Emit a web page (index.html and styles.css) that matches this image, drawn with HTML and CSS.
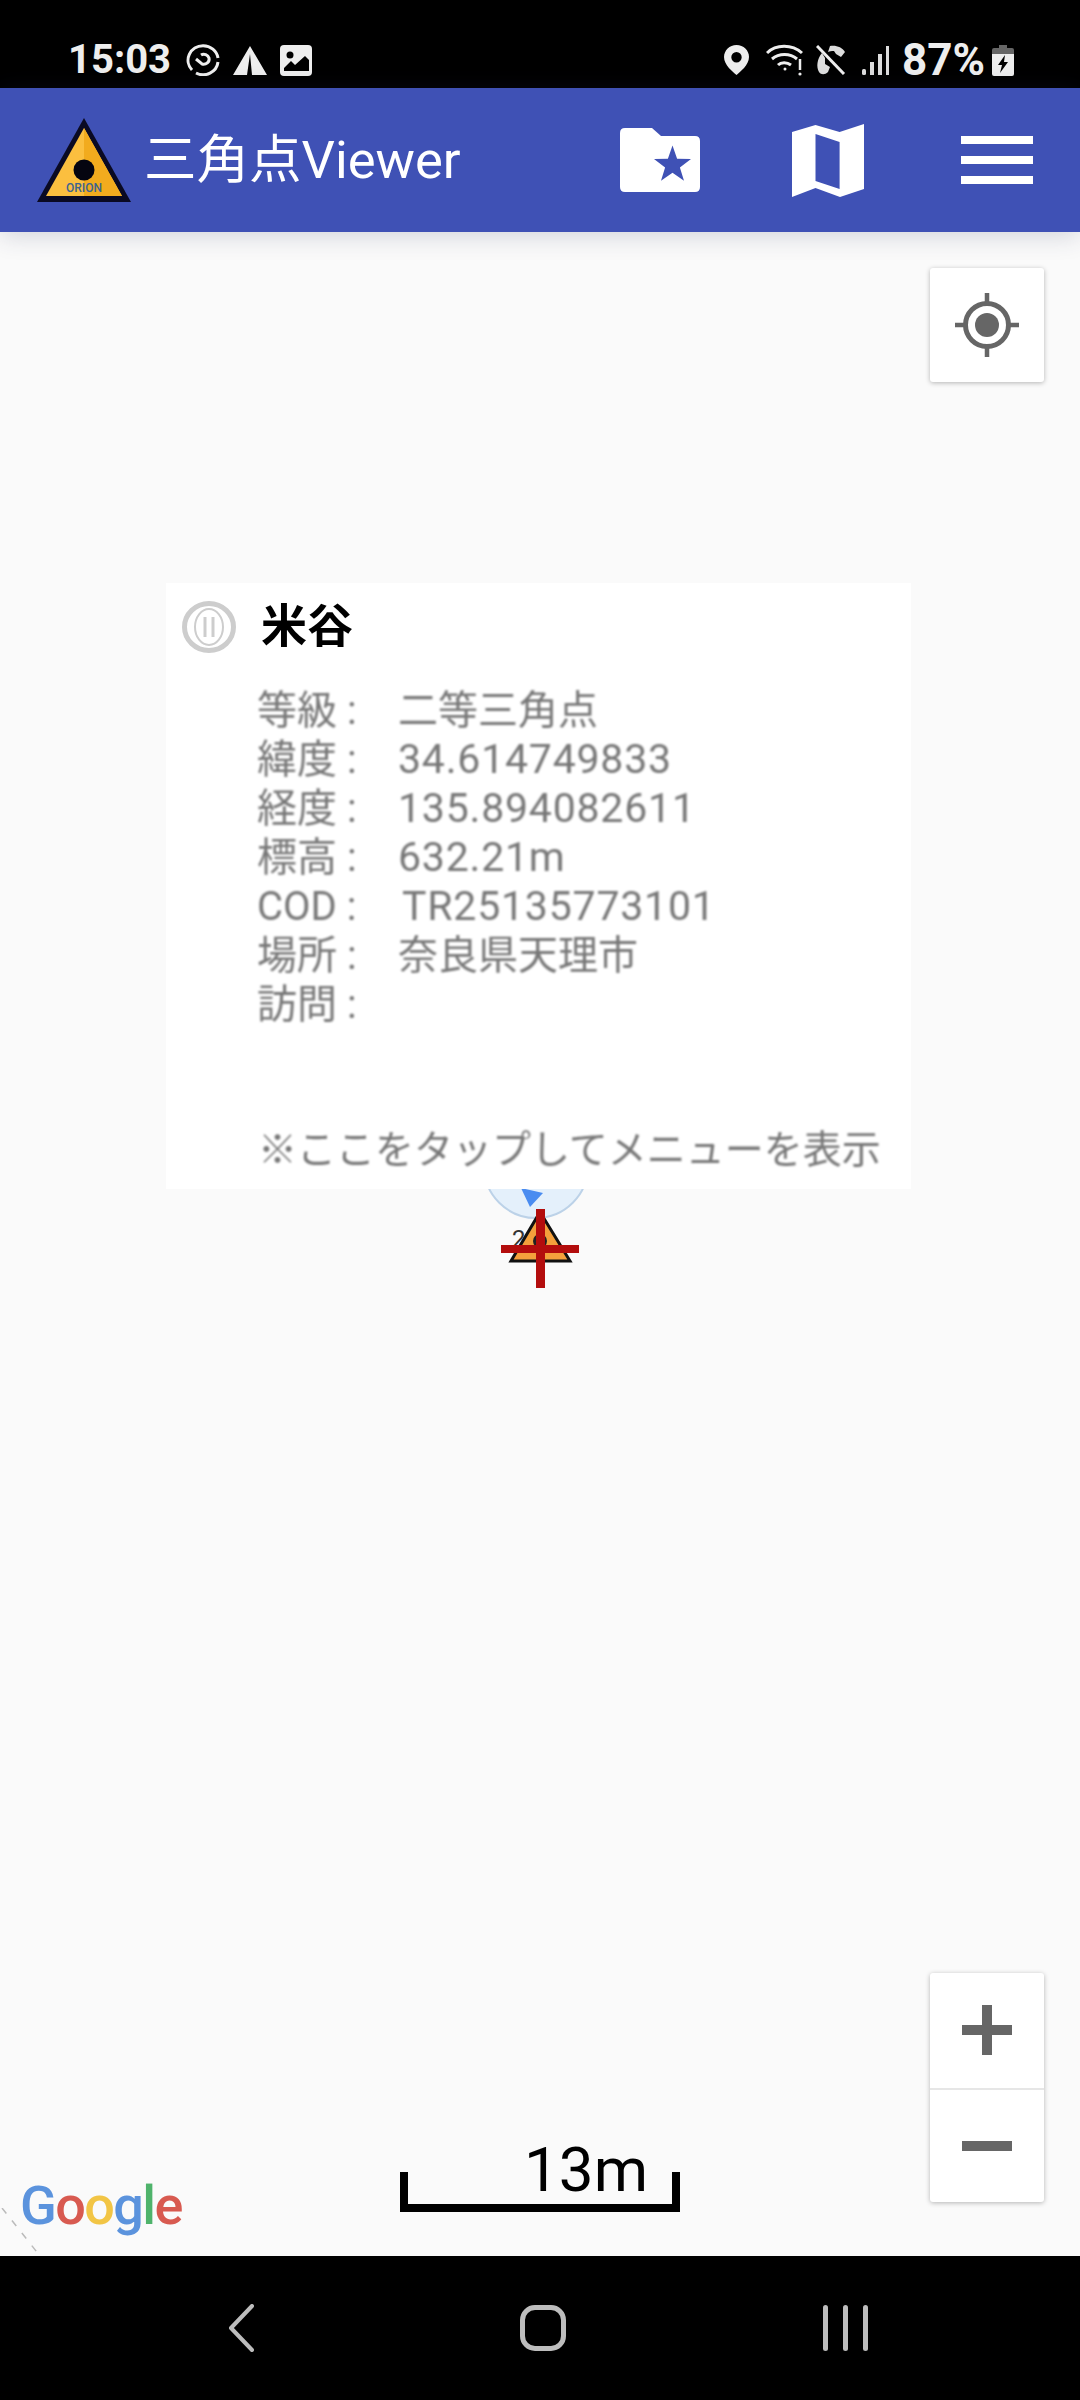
FILE: index.html
```html
<!DOCTYPE html>
<html lang="ja">
<head>
    <meta charset="UTF-8">
    <meta name="viewport" content="width=device-width, initial-scale=1.0">
    <title>三角点Viewer</title>
    <link rel="stylesheet" href="styles.css">
</head>
<body>
    <div id="app">
        <!-- status bar -->
        <div class="status-bar">
            <span class="status-time">15:03</span>
            <svg class="st-swirl" width="34" height="32" viewBox="0 0 34 32" fill="none" stroke="#eee" stroke-width="3">
                <path d="M6 26A15 14.500 0 0 1 17 1.700A15 14.500 0 0 1 32 14"/>
                <path d="M32 18A15 14.500 0 0 1 10 29"/>
                <path d="M10 15l6 5c4 1 8-2 7-6c-1-3-5-5-8-3"/>
            </svg>
            <svg class="st-tri" width="34" height="29" viewBox="0 0 34 29">
                <path d="M17 0L34 29H19L17 8L14 29H0Z" fill="#eee"/>
            </svg>
            <svg class="st-image" width="32" height="31" viewBox="0 0 32 31">
                <rect width="32" height="31" rx="4" fill="#eee"/>
                <circle cx="10" cy="10" r="3.500" fill="#000"/>
                <path d="M4 26V23L11 16L15 20L25 11L29 15V26Z" fill="#000"/>
            </svg>
            <svg class="st-pin" width="25" height="30" viewBox="0 0 25 30">
                <path fill-rule="evenodd" d="M12.500 0C5.500 0 0 5.500 0 12C0 20 9 27 12.500 30C16 27 25 20 25 12C25 5.500 19.500 0 12.500 0ZM12.500 7A5.200 5.200 0 1 1 12.500 17.400A5.200 5.200 0 1 1 12.500 7Z" fill="#eee"/>
            </svg>
            <svg class="st-wifi" width="38" height="32" viewBox="0 0 38 32" fill="none" stroke="#eee" stroke-width="3">
                <path d="M1 9C10 0 26 0 36 9"/>
                <path d="M6 15C13 9 24 9 31 15"/>
                <path d="M12 21C15 18 21 18 25 21"/>
                <circle cx="19" cy="25" r="1.500" fill="#eee" stroke="none"/>
                <path d="M34 15V26" stroke-width="2.500"/>
                <circle cx="34" cy="30" r="1.600" fill="#eee" stroke="none"/>
            </svg>
            <svg class="st-phone" width="30" height="30" viewBox="0 0 30 30">
                <path d="M1 1L28 29" stroke="#eee" stroke-width="3"/>
                <path d="M14 1C20 0 26 2 29 7L25 12L20 9L18 6C15 6 14 6 12 7Z" fill="#ddd"/>
                <path d="M6 8C1 14 0 22 3 27C5 30 9 30 12 27L14 22L9 19L9 13Z" fill="#ddd"/>
            </svg>
            <svg class="st-signal" width="28" height="29" viewBox="0 0 28 29" fill="#ddd">
                <rect x="0" y="23" width="4" height="6" rx="1.500"/>
                <rect x="8" y="16" width="4" height="13"/>
                <rect x="16" y="8" width="4" height="21"/>
                <rect x="24" y="0" width="3" height="29"/>
            </svg>
            <span class="status-pct">87%</span>
            <svg class="st-battery" width="22" height="31" viewBox="0 0 22 31">
                <path d="M7 0H15V3H20Q22 3 22 5V9H0V5Q0 3 2 3H7Z" fill="#666"/>
                <path d="M0 9H22V29Q22 31 20 31H2Q0 31 0 29Z" fill="#eee"/>
                <path d="M13 10L6 20H10L8 28L16 17H12Z" fill="#000"/>
            </svg>
        </div>

        <!-- app bar -->
        <div class="app-bar">
            <svg class="logo" width="94" height="84" viewBox="0 0 94 84">
                <path d="M47 0L94 84H0Z" fill="#0a0a23"/>
                <path d="M47 10L85 78H9Z" fill="#fbbf3f"/>
                <path d="M47 10L85 78H47Z" fill="#f2ab1e"/>
                <circle cx="47" cy="52" r="10.500" fill="#050510"/>
                <text x="47" y="74" class="logo-text">ORION</text>
            </svg>
            <span class="app-title">三角点Viewer</span>
            <div class="app-actions">
                <svg width="80" height="64" viewBox="0 0 80 64">
                    <path d="M5 0H32L41 8H75Q80 8 80 13V59Q80 64 75 64H5Q0 64 0 59V5Q0 0 5 0Z" fill="#fff"/>
                    <path d="M52.500 17.500L57.100 30.700L71 31L59.900 39.400L64 52.800L52.500 44.800L41 52.800L45.100 39.400L34 31L47.900 30.700Z" fill="#3f51b5"/>
                </svg>
                <svg class="act-map" width="73" height="73" viewBox="0 0 73 73">
                    <path fill-rule="evenodd" fill="#fff" d="M0 8L23.500 1L47.600 8L72 0V65L48 73L23.500 64L0 73ZM23.500 10L47.600 18V65L23.500 57Z"/>
                </svg>
                <div class="act-menu">
                    <span></span>
                    <span></span>
                    <span></span>
                </div>
            </div>
        </div>

        <!-- map -->
        <div class="map">
            <svg class="marker" width="110" height="180" viewBox="0 0 110 180">
                <circle cx="56" cy="56" r="52" fill="#e4f0fb" stroke="#bcd2e8" stroke-width="2"/>
                <path d="M41 78L63 83L50 97Z" fill="#4a8cf0"/>
                <path d="M60 102L90 151H31Z" fill="#f4a03c" stroke="#111" stroke-width="3"/>
                <circle cx="60" cy="131" r="7" fill="#222"/>
                <text x="32" y="137" class="marker-num">2</text>
                <rect x="56" y="99" width="9" height="79" fill="#b30d0d"/>
                <rect x="21" y="135" width="78" height="8" fill="#b30d0d"/>
            </svg>

            <div class="info-card">
                <div class="info-head">
                    <svg width="54" height="52" viewBox="0 0 54 52" fill="none" stroke="#cdcdcd">
                        <ellipse cx="27" cy="26" rx="24.500" ry="23.500" stroke-width="5"/>
                        <ellipse cx="27" cy="26" rx="14" ry="18" stroke-width="2"/>
                        <path d="M23 16V36M31 16V36" stroke-width="3"/>
                    </svg>
                    <span class="info-name">米谷</span>
                </div>
                <div class="info-rows">
                    <div class="info-row"><span class="info-label">等級 :</span><span class="val-cjk">二等三角点</span></div>
                    <div class="info-row"><span class="info-label">緯度 :</span><span class="val-num">34.614749833</span></div>
                    <div class="info-row"><span class="info-label">経度 :</span><span class="val-num">135.894082611</span></div>
                    <div class="info-row"><span class="info-label">標高 :</span><span class="val-num">632.21m</span></div>
                    <div class="info-row"><span class="info-label">COD :</span><span class="val-num val-cod">TR25135773101</span></div>
                    <div class="info-row"><span class="info-label">場所 :</span><span class="val-cjk">奈良県天理市</span></div>
                    <div class="info-row"><span class="info-label">訪問 :</span></div>
                </div>
                <div class="info-hint">※ここをタップしてメニューを表示</div>
            </div>

            <div class="map-btn locate-btn">
                <svg width="64" height="64" viewBox="0 0 64 64" fill="none" stroke="#666">
                    <circle cx="32" cy="32" r="21.500" stroke-width="5"/>
                    <circle cx="32" cy="32" r="12" fill="#666" stroke="none"/>
                    <path d="M32 0V10M32 54V64M0 32H10M54 32H64" stroke-width="4.500"/>
                </svg>
            </div>

            <div class="zoom-btns">
                <div class="zoom-btn"><span class="zoom-plus"></span></div>
                <div class="zoom-btn"><span class="zoom-minus"></span></div>
            </div>

            <div class="scale">
                <span class="scale-label">13m</span>
            </div>

            <svg class="dash-line" width="42" height="48" viewBox="0 0 42 48">
                <path d="M2 0L40 48" stroke="#bbb" stroke-width="1.500" stroke-dasharray="7 9" fill="none"/>
            </svg>

            <div class="google"><span class="g-blue">G</span><span class="g-red">o</span><span class="g-yellow">o</span><span class="g-blue">g</span><span class="g-green">l</span><span class="g-red">e</span></div>
        </div>

        <!-- nav bar -->
        <div class="nav-bar">
            <svg width="26" height="48" viewBox="0 0 26 48" fill="none" stroke="#bdbdbd" stroke-width="4" stroke-linecap="round" stroke-linejoin="round">
                <path d="M24 2L3 24L24 46"/>
            </svg>
            <div class="nav-home"></div>
            <div class="nav-recents">
                <span></span>
                <span></span>
                <span></span>
            </div>
        </div>
    </div>
</body>
</html>
```

FILE: styles.css
```css
* {
    box-sizing: border-box;
}

body {
    margin: 0;
    padding: 0;
    background-color: #000;
    font-family: Roboto, "Noto Sans CJK JP", sans-serif;
}

#app {
    display: flex;
    flex-direction: column;
    width: 1080px;
    height: 2400px;
    overflow: hidden;
}

/* status bar */
.status-bar {
    display: flex;
    align-items: center;
    height: 88px;
    padding: 32px 0 0 68px;
    background-color: #000;
    color: #eee;
}

.status-time {
    font-size: 40px;
    font-weight: 700;
    line-height: 46px;
}

.status-pct {
    margin-left: 12px;
    font-size: 44px;
    font-weight: 700;
    line-height: 46px;
}

.st-swirl {
    margin-left: 15px;
}

.st-tri {
    margin-left: 13px;
}

.st-image {
    margin-left: 13px;
}

.st-pin {
    margin-left: auto;
}

.st-wifi {
    margin-left: 17px;
}

.st-phone {
    margin-left: 12px;
}

.st-signal {
    margin-left: 16px;
}

.st-battery {
    margin: 0 66px 0 7px;
}

/* app bar */
.app-bar {
    position: relative;
    z-index: 2;
    display: flex;
    align-items: center;
    flex-shrink: 0;
    height: 144px;
    padding-left: 37px;
    background-color: #3f51b5;
    box-shadow: 0 3px 24px rgba(40, 50, 90, 0.2);
}

.logo-text {
    fill: #3d6390;
    font-size: 12px;
    font-weight: 500;
    text-anchor: middle;
}

.app-title {
    margin-left: 13px;
    color: #fff;
    font-size: 52.5px;
    line-height: 60px;
}

.app-actions {
    display: flex;
    align-items: center;
    margin-left: auto;
    margin-right: 47px;
}

.act-map {
    margin-left: 92px;
}

.act-menu {
    display: flex;
    flex-direction: column;
    gap: 12px;
    width: 72px;
    margin-left: 96px;
}

.act-menu span {
    height: 8px;
    background-color: #fff;
}

/* map */
.map {
    position: relative;
    flex: 1;
    background-color: #fafafa;
}

.marker {
    position: absolute;
    left: 480px;
    top: 878px;
}

.marker-num {
    fill: #333;
    font-size: 24px;
}

.info-card {
    position: absolute;
    left: 166px;
    top: 351px;
    width: 745px;
    height: 606px;
    padding: 18px 0 0 16px;
    background-color: #fff;
    color: #777;
    font-family: Roboto, "Noto Sans CJK JP", sans-serif;
}

.info-head {
    display: flex;
    align-items: center;
    gap: 25px;
    height: 52px;
    filter: blur(0.7px);
}

.info-name {
    margin-top: -2px;
    color: #000;
    font-size: 46px;
    font-weight: 700;
    line-height: 52px;
}

.info-rows {
    margin: 33px 0 0 75px;
    filter: blur(1px);
}

.info-row {
    display: flex;
    height: 49px;
    font-size: 40px;
    line-height: 49px;
    white-space: nowrap;
}

.info-label {
    width: 141px;
}

.val-num {
    font-size: 41px;
    letter-spacing: 0.8px;
}

.val-cod {
    margin-left: 4px;
}

.info-hint {
    margin: 97px 0 0 76px;
    font-size: 39px;
    line-height: 49px;
    white-space: nowrap;
    filter: blur(1px);
}

.map-btn,
.zoom-btns {
    position: absolute;
    right: 36px;
    width: 114px;
    background-color: #fff;
    border-radius: 3px;
    box-shadow: 0 1px 5px rgba(0, 0, 0, 0.28);
}

.locate-btn {
    top: 36px;
    display: flex;
    align-items: center;
    justify-content: center;
    height: 114px;
}

.zoom-btns {
    bottom: 54px;
    height: 229px;
}

.zoom-btn {
    display: flex;
    align-items: center;
    justify-content: center;
    height: 114.5px;
}

.zoom-btn + .zoom-btn {
    border-top: 2px solid #e6e6e6;
}

.zoom-plus,
.zoom-minus {
    position: relative;
    display: block;
    width: 50px;
    height: 10px;
    background-color: #666;
}

.zoom-plus::after {
    content: "";
    position: absolute;
    left: 20px;
    top: -20px;
    width: 10px;
    height: 50px;
    background-color: #666;
}

.scale {
    position: absolute;
    left: 400px;
    top: 1940px;
    width: 280px;
    height: 40px;
    border: 8px solid #000;
    border-top: none;
}

.scale-label {
    position: absolute;
    right: 24px;
    top: -38px;
    color: #000;
    font-size: 62px;
    font-weight: 400;
    line-height: 72px;
}

.dash-line {
    position: absolute;
    left: 0;
    bottom: 0;
}

.google {
    position: absolute;
    left: 20px;
    top: 1942px;
    font-family: Roboto, sans-serif;
    font-size: 54px;
    font-weight: 500;
    line-height: 64px;
    letter-spacing: -1.6px;
}

.g-blue {
    color: #5b93dd;
}

.g-red {
    color: #d85a50;
}

.g-yellow {
    color: #f2c545;
}

.g-green {
    color: #4fb36b;
}

/* nav bar */
.nav-bar {
    display: grid;
    grid-template-columns: repeat(3, 302px);
    align-items: center;
    justify-items: center;
    flex-shrink: 0;
    height: 144px;
    padding-left: 90px;
    background-color: #000;
}

.nav-home {
    width: 46px;
    height: 46px;
    border: 5px solid #bdbdbd;
    border-radius: 15px;
}

.nav-recents {
    display: flex;
    gap: 15px;
}

.nav-recents span {
    width: 5px;
    height: 46px;
    background-color: #bdbdbd;
    border-radius: 3px;
}
```
